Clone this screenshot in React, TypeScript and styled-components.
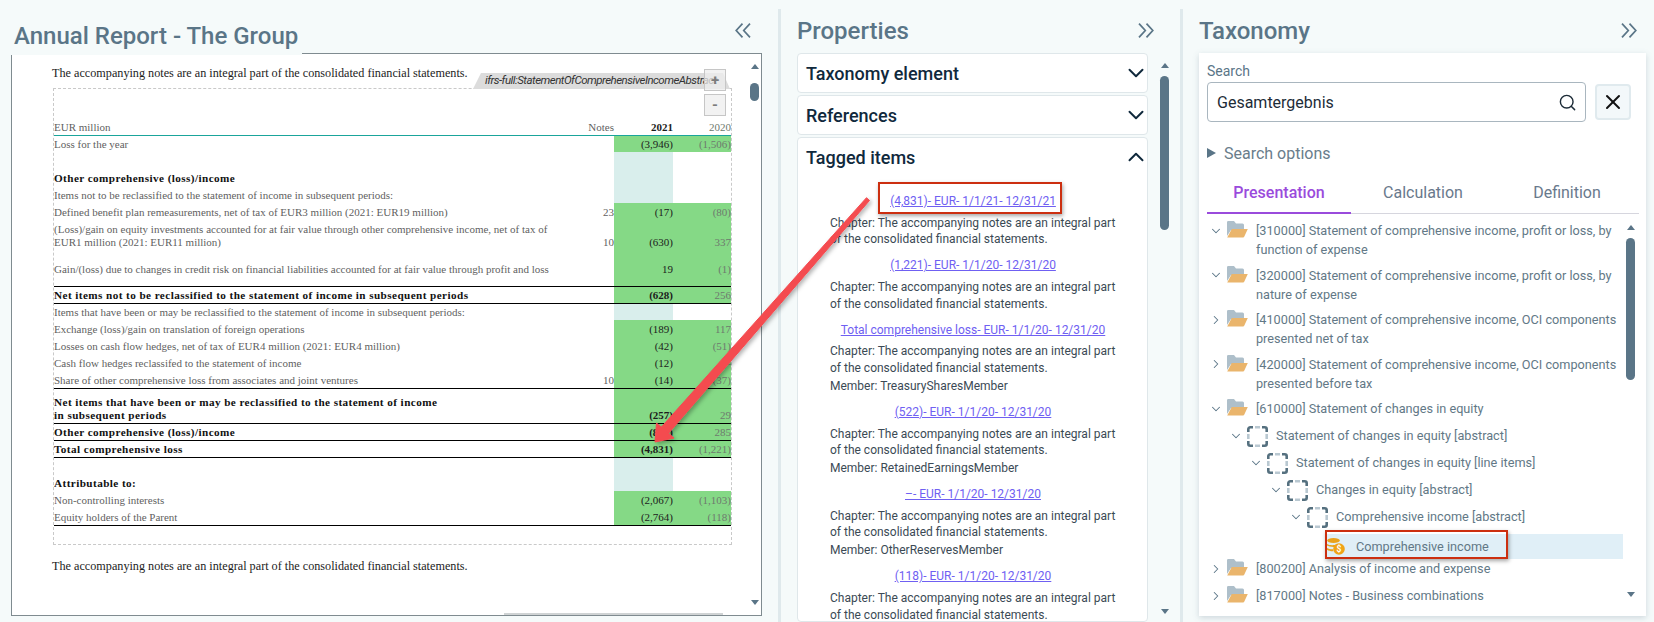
import React from "react";
import styled, { createGlobalStyle } from "styled-components";
import { ChevronDown, ChevronRight, ChevronUp, Search, X } from "lucide-react";

const Global = createGlobalStyle`
  html, body { margin: 0; padding: 0; height: 622px; overflow: hidden; background: #f5fafa; }
  #root { height: 622px; }
  * { box-sizing: border-box; }
`;

const Page = styled.div`
  position: relative;
  display: flex;
  width: 1654px;
  height: 622px;
  overflow: hidden;
  background: #f5fafa;
  font-family: Roboto, "Liberation Sans", sans-serif;
`;
const LeftPanel = styled.section`
  width: 778px;
  flex: none;
  padding-left: 11px;
  display: flex;
  flex-direction: column;
`;
const Splitter = styled.div`
  width: 3px;
  flex: none;
  margin-top: 9px;
  background: #dfe9ec;
`;
const MiddlePanel = styled.section`
  width: 399px;
  flex: none;
  padding-left: 16px;
  display: flex;
  flex-direction: column;
  height: 622px;
`;
const RightPanel = styled.section`
  width: 471px;
  flex: none;
  padding-left: 16px;
  padding-right: 8px;
  display: flex;
  flex-direction: column;
`;
const HeaderRow = styled.header<{ $right: number }>`
  height: 53px;
  flex: none;
  display: flex;
  align-items: flex-start;
  justify-content: space-between;
  padding-right: ${(p) => p.$right}px;
`;
const LeftTitle = styled.h1`
  position: relative;
  z-index: 1;
  margin: 0;
  width: 291px;
  height: 55px;
  padding: 22px 0 0 3px;
  font-size: 24px;
  line-height: 28px;
  font-weight: 500;
  color: #5a7587;
  background: #f5fafa;
  white-space: nowrap;
`;
const Title = styled.h2`
  margin: 0;
  padding-top: 17px;
  font-size: 24px;
  line-height: 28px;
  font-weight: 500;
  color: #5a7587;
`;
const Collapse = styled.span`
  display: flex;
  padding-top: 23px;
  color: #5a7587;
`;
const DocFrame = styled.div`
  position: relative;
  width: 751px;
  height: 563px;
  flex: none;
  display: flex;
  background: #fff;
  border: 1px solid #7f8b90;
`;
const DocBody = styled.div`
  flex: 1;
  padding: 11px 0 0 40px;
`;
const Note = styled.p`
  margin: 0;
  font-family: "Liberation Serif", serif;
  font-size: 12.2px;
  line-height: 16px;
  color: #1c1c1c;
  white-space: nowrap;
`;
const Dashed = styled.div`
  position: relative;
  width: 679px;
  margin: 7px 0 13px 1px;
  padding: 29px 0 18px;
  border: 1px dashed #c9c9c9;
`;
const ConceptTag = styled.div`
  position: absolute;
  top: -16px;
  right: 1px;
  width: 257px;
  height: 16px;
  padding-left: 12px;
  background: #dcdcdc;
  clip-path: polygon(8px 0, 250px 0, 100% 100%, 0 100%);
  font-size: 11.5px;
  letter-spacing: -0.52px;
  line-height: 15px;
  font-style: italic;
  color: #333;
  white-space: nowrap;
  overflow: hidden;
`;
const ZoomButton = styled.button<{ $top: number }>`
  position: absolute;
  right: 5px;
  top: ${(p) => p.$top}px;
  width: 22px;
  height: 22px;
  padding: 0;
  border: 1px solid #c6c6c6;
  background: rgba(238, 238, 238, 0.75);
  color: #7c7c7c;
  font-family: Roboto, sans-serif;
  font-size: 15px;
  font-weight: 700;
  line-height: 18px;
`;
type RowP = { $h: number; $rule?: string };
const Row = styled.div<RowP>`
  display: grid;
  grid-template-columns: 1fr 59px 58px;
  height: ${(p) => p.$h}px;
  border-bottom: ${(p) => p.$rule || "none"};
`;
const Label = styled.div<{ $bold?: boolean; $pb?: number }>`
  display: flex;
  align-items: flex-end;
  justify-content: space-between;
  padding-bottom: ${(p) => p.$pb ?? 1}px;
  font-family: "Liberation Serif", serif;
  font-size: ${(p) => (p.$bold ? 11.2 : 11)}px;
  letter-spacing: ${(p) => (p.$bold ? 0.42 : 0)}px;
  line-height: 13px;
  font-weight: ${(p) => (p.$bold ? 700 : 400)};
  color: ${(p) => (p.$bold ? "#111" : "#5f5f5f")};
  white-space: pre-line;
`;
const Notes = styled.span`
  font-size: 11px;
  letter-spacing: 0;
  font-weight: 400;
  color: #5f5f5f;
`;
const Cell = styled.div<{ $fill?: string; $bold?: boolean; $muted?: boolean; $pb?: number }>`
  display: flex;
  align-items: flex-end;
  justify-content: flex-end;
  padding-bottom: ${(p) => p.$pb ?? 1}px;
  background: ${(p) => p.$fill || "transparent"};
  font-family: "Liberation Serif", serif;
  font-size: 11px;
  line-height: 13px;
  font-weight: ${(p) => (p.$bold ? 700 : 400)};
  color: ${(p) => (p.$muted ? "#6e7a6e" : "#1c1c1c")};
`;
const HScroll = styled.div`
  position: absolute;
  left: 492px;
  bottom: 0;
  width: 219px;
  height: 2px;
  background: #cfd3d4;
`;
const Rail = styled.div<{ $pt: number; $h: number; $mr?: number }>`
  width: 9px;
  flex: none;
  height: ${(p) => p.$h}px;
  margin-top: ${(p) => p.$pt}px;
  margin-right: ${(p) => p.$mr || 0}px;
  display: flex;
  flex-direction: column;
  align-items: center;
`;
const ArrowUp = styled.i`
  width: 0;
  height: 0;
  flex: none;
  border-left: 4.5px solid transparent;
  border-right: 4.5px solid transparent;
  border-bottom: 5px solid #5a7587;
`;
const ArrowDown = styled.i`
  width: 0;
  height: 0;
  flex: none;
  margin-top: auto;
  border-left: 4.5px solid transparent;
  border-right: 4.5px solid transparent;
  border-top: 5px solid #5a7587;
`;
const Thumb = styled.div<{ $gap: number; $h: number }>`
  width: 9px;
  height: ${(p) => p.$h}px;
  margin-top: ${(p) => p.$gap}px;
  flex: none;
  border-radius: 5px;
  background: #5a7587;
`;
const PropsBody = styled.div`
  display: flex;
  gap: 12px;
  flex: 1;
  min-height: 0;
`;
const Cards = styled.div`
  width: 351px;
  flex: none;
  display: flex;
  flex-direction: column;
  gap: 2px;
`;
const Card = styled.div<{ $open?: boolean }>`
  flex: ${(p) => (p.$open ? 1 : "none")};
  height: ${(p) => (p.$open ? "auto" : "40px")};
  background: #fff;
  border: 1px solid #dfe7ea;
  border-radius: 4px;
  overflow: hidden;
`;
const CardHead = styled.div`
  height: 38px;
  padding: 0 0 0 8px;
  display: flex;
  align-items: center;
  justify-content: space-between;
  font-size: 18px;
  font-weight: 500;
  color: #10293c;
  svg { margin-right: -2px; }
`;
const Tagged = styled.div`
  padding: 17px 31px 0 32px;
`;
const ItemLink = styled.a`
  display: block;
  margin-top: 9.5px;
  text-align: center;
  font-size: 12px;
  line-height: 16.5px;
  color: #6f60f2;
  text-decoration: underline;
  &:first-child { margin-top: 0; }
`;
const ItemText = styled.p`
  margin: 5.3px 0 0;
  font-size: 12px;
  line-height: 16.5px;
  color: #3b4a55;
`;
const ItemMember = styled(ItemText)`
  margin-top: 1.5px;
`;
const TaxCard = styled.div`
  width: 447px;
  height: 563px;
  flex: none;
  padding: 11px 8px 0 8px;
  background: #fff;
  box-shadow: 0 2px 6px rgba(90, 117, 135, 0.25);
`;
const FieldLabel = styled.div`
  height: 18px;
  font-size: 14px;
  line-height: 14px;
  color: #5a7587;
`;
const SearchRow = styled.div`
  display: flex;
  align-items: center;
  gap: 9px;
`;
const SearchBox = styled.div`
  width: 379px;
  height: 40px;
  padding: 0 8px 0 9px;
  display: flex;
  align-items: center;
  justify-content: space-between;
  border: 1px solid #a9b6bf;
  border-radius: 4px;
  font-size: 16px;
  color: #1d2c38;
`;
const ClearButton = styled.button`
  width: 36px;
  height: 36px;
  padding: 0;
  display: flex;
  align-items: center;
  justify-content: center;
  border: 2px solid #e0eaee;
  border-radius: 4px;
  background: #f3f8fa;
  color: #111;
`;
const Options = styled.div`
  margin-top: 21px;
  height: 20px;
  display: flex;
  align-items: center;
  gap: 8px;
  font-size: 16px;
  color: #697d8b;
`;
const Triangle = styled.i`
  width: 0;
  height: 0;
  border-top: 5px solid transparent;
  border-bottom: 5px solid transparent;
  border-left: 9px solid #5a7587;
`;
const Tabs = styled.div`
  margin-top: 20px;
  width: 432px;
  display: flex;
  border-bottom: 1px solid #d6d6de;
`;
const Tab = styled.div<{ $active?: boolean }>`
  width: 144px;
  height: 31px;
  margin-bottom: -1px;
  text-align: center;
  font-size: 16px;
  line-height: 20px;
  font-weight: ${(p) => (p.$active ? 500 : 400)};
  color: ${(p) => (p.$active ? "#9a4bdc" : "#69798c")};
  border-bottom: 2px solid ${(p) => (p.$active ? "#9a4bdc" : "transparent")};
`;
const TreeArea = styled.div`
  display: flex;
  gap: 3px;
  margin-left: -1px;
`;
const Tree = styled.div`
  width: 417px;
  padding-top: 7px;
`;
const TreeRow = styled.div<{ $level: number; $h: number; $selected?: boolean }>`
  display: flex;
  align-items: ${(p) => (p.$selected ? "center" : "flex-start")};
  height: ${(p) => p.$h}px;
  padding-left: ${(p) => p.$level * 20}px;
  background: ${(p) =>
    p.$selected ? "linear-gradient(to right, transparent 120px, #e0eff7 120px)" : "transparent"};
`;
const Twist = styled.span`
  width: 20px;
  height: 19px;
  flex: none;
  display: flex;
  align-items: center;
  justify-content: center;
  color: #5a7587;
`;
const IconSlot = styled.span`
  width: 21px;
  flex: none;
  margin: 0 8px 0 1px;
  display: flex;
`;
const TreeText = styled.span`
  font-size: 12.7px;
  line-height: 19.2px;
  color: #627886;
`;
const RedBox = styled.div<{ $x: number; $y: number; $w: number; $h: number }>`
  position: absolute;
  left: ${(p) => p.$x}px;
  top: ${(p) => p.$y}px;
  width: ${(p) => p.$w}px;
  height: ${(p) => p.$h}px;
  border: 2px solid #cc2f10;
  box-shadow: 1px 2px 4px rgba(0, 0, 0, 0.35);
`;
const Overlay = styled.svg`
  position: absolute;
  left: 0;
  top: 0;
  pointer-events: none;
`;

const DoubleChevron = ({ left }: { left?: boolean }) => (
  <svg width="16" height="15" viewBox="0 0 16 15" fill="none" stroke="currentColor" strokeWidth="1.7">
    <path d={left ? "M7.5 .6L1.200 7.500L7.500 14.400M15 .6L8.700 7.500L15 14.400" : "M1 .6L7.300 7.500L1 14.400M8.500 .6L14.800 7.500L8.500 14.400"} />
  </svg>
);
const Folder = () => (
  <svg width="21" height="17" viewBox="0 0 21 17">
    <path d="M0 1.200A1.200 1.200 0 0 1 1.200 0H7l2 2.500h6.500A1.500 1.500 0 0 1 17 4v5H4L0 15Z" fill="#aebfca" />
    <path d="M4.800 8H20.800L17.200 15.800c-.2.500-.6.700-1.100.7H.2Z" fill="#eab56c" />
  </svg>
);
const Dashes = () => (
  <svg width="21" height="21" viewBox="0 0 21 21" fill="none" strokeWidth="2.6">
    <path d="M1.300 6V3.300a2 2 0 0 1 2-2H6M15 1.300h2.700a2 2 0 0 1 2 2V6M19.700 15v2.700a2 2 0 0 1-2 2H15M6 19.700H3.300a2 2 0 0 1-2-2V15" stroke="#55707f" />
    <path d="M8 1.300h5M19.700 8v5M13 19.700H8M1.300 13V8" stroke="#b9c8d1" />
  </svg>
);
const Coin = () => (
  <svg width="18" height="17" viewBox="0 0 18 17">
    <ellipse cx="6.500" cy="2.600" rx="6.300" ry="2.500" fill="#eaa21c" />
    <path d="M0 6c2 1.400 7 1.500 9 .6L7.500 9C4.500 9.200 1.500 8.600 0 7.600ZM0 10c1.500 1 4 1.400 6 1.300l.3 2C4 13.400 1.500 12.800 0 11.800Z" fill="#eaa21c" />
    <circle cx="12" cy="11" r="5.800" fill="#f0a417" />
    <text x="12" y="14" textAnchor="middle" fontSize="8.500" fontWeight="700" fill="#fff" fontFamily="Roboto, sans-serif">$</text>
  </svg>
);

type R = {
  label?: string; notes?: string; a?: string; b?: string; h: number;
  bold?: boolean; fill?: "tint" | "green"; rule?: boolean; pb?: number;
};
const GREEN = "#85d986";
const TINT = "#d9eeec";
const rows: R[] = [
  { label: "Loss for the year", a: "(3,946)", b: "(1,506)", h: 16, fill: "green" },
  { h: 17, fill: "tint" },
  { label: "Other comprehensive (loss)/income", h: 17, bold: true, fill: "tint" },
  { label: "Items not to be reclassified to the statement of income in subsequent periods:", h: 17, fill: "tint" },
  { label: "Defined benefit plan remeasurements, net of tax of EUR3 million (2021: EUR19 million)", notes: "23", a: "(17)", b: "(80)", h: 17, fill: "green" },
  { label: "(Loss)/gain on equity investments accounted for at fair value through other comprehensive income, net of tax of\nEUR1 million (2021: EUR11 million)", notes: "10", a: "(630)", b: "337", h: 30, fill: "green" },
  { label: "Gain/(loss) due to changes in credit risk on financial liabilities accounted for at fair value through profit and loss", a: "19", b: "(1)", h: 37, fill: "green", rule: true, pb: 10 },
  { label: "Net items not to be reclassified to the statement of income in subsequent periods", a: "(628)", b: "256", h: 17, bold: true, fill: "green", rule: true },
  { label: "Items that have been or may be reclassified to the statement of income in subsequent periods:", h: 16, fill: "tint" },
  { label: "Exchange (loss)/gain on translation of foreign operations", a: "(189)", b: "117", h: 17, fill: "green" },
  { label: "Losses on cash flow hedges, net of tax of EUR4 million (2021: EUR4 million)", a: "(42)", b: "(51)", h: 17, fill: "green" },
  { label: "Cash flow hedges reclassifed to the statement of income", a: "(12)", b: "–", h: 17, fill: "green" },
  { label: "Share of other comprehensive loss from associates and joint ventures", notes: "10", a: "(14)", b: "(37)", h: 18, fill: "green", rule: true },
  { label: "Net items that have been or may be reclassified to the statement of income\nin subsequent periods", a: "(257)", b: "29", h: 35, bold: true, fill: "green", rule: true },
  { label: "Other comprehensive (loss)/income", a: "(885)", b: "285", h: 17, bold: true, fill: "green", rule: true },
  { label: "Total comprehensive loss", a: "(4,831)", b: "(1,221)", h: 17, bold: true, fill: "green", rule: true },
  { h: 16, fill: "tint" },
  { label: "Attributable to:", h: 17, bold: true, fill: "tint" },
  { label: "Non-controlling interests", a: "(2,067)", b: "(1,103)", h: 17, fill: "green" },
  { label: "Equity holders of the Parent", a: "(2,764)", b: "(118)", h: 18, fill: "green", rule: true },
];

const chap = "Chapter: The accompanying notes are an integral part of the consolidated financial statements.";
const items = [
  { link: "(4,831)- EUR- 1/1/21- 12/31/21" },
  { link: "(1,221)- EUR- 1/1/20- 12/31/20" },
  { link: "Total comprehensive loss- EUR- 1/1/20- 12/31/20", member: "TreasurySharesMember" },
  { link: "(522)- EUR- 1/1/20- 12/31/20", member: "RetainedEarningsMember" },
  { link: "–- EUR- 1/1/20- 12/31/20", member: "OtherReservesMember" },
  { link: "(118)- EUR- 1/1/20- 12/31/20" },
];

type T = { level: number; h: number; twist?: "down" | "right"; icon: "folder" | "dash" | "coin"; text: string; selected?: boolean };
const tree: T[] = [
  { level: 0, h: 44.5, twist: "down", icon: "folder", text: "[310000] Statement of comprehensive income, profit or loss, by function of expense" },
  { level: 0, h: 44.5, twist: "down", icon: "folder", text: "[320000] Statement of comprehensive income, profit or loss, by nature of expense" },
  { level: 0, h: 44.5, twist: "right", icon: "folder", text: "[410000] Statement of comprehensive income, OCI components presented net of tax" },
  { level: 0, h: 44.5, twist: "right", icon: "folder", text: "[420000] Statement of comprehensive income, OCI components presented before tax" },
  { level: 0, h: 27, twist: "down", icon: "folder", text: "[610000] Statement of changes in equity" },
  { level: 1, h: 27, twist: "down", icon: "dash", text: "Statement of changes in equity [abstract]" },
  { level: 2, h: 27, twist: "down", icon: "dash", text: "Statement of changes in equity [line items]" },
  { level: 3, h: 27, twist: "down", icon: "dash", text: "Changes in equity [abstract]" },
  { level: 4, h: 27, twist: "down", icon: "dash", text: "Comprehensive income [abstract]" },
  { level: 5, h: 25, icon: "coin", text: "Comprehensive income", selected: true },
  { level: 0, h: 27, twist: "right", icon: "folder", text: "[800200] Analysis of income and expense" },
  { level: 0, h: 27, twist: "right", icon: "folder", text: "[817000] Notes - Business combinations" },
];

export default function App() {
  return (
    <Page>
      <Global />
      <LeftPanel>
        <HeaderRow $right={27}>
          <LeftTitle>Annual Report - The Group</LeftTitle>
          <Collapse><DoubleChevron left /></Collapse>
        </HeaderRow>
        <DocFrame>
          <DocBody>
            <Note>The accompanying notes are an integral part of the consolidated financial statements.</Note>
            <Dashed>
              <ConceptTag>ifrs-full:StatementOfComprehensiveIncomeAbstract</ConceptTag>
              <ZoomButton $top={-20}>+</ZoomButton>
              <ZoomButton $top={5}>-</ZoomButton>
              <Row $h={18} $rule="1.5px solid #1aa59b">
                <Label>EUR million<Notes>Notes</Notes></Label>
                <Cell $bold>2021</Cell>
                <Cell $muted>2020</Cell>
              </Row>
              {rows.map((r, i) => (
                <Row key={i} $h={r.h} $rule={r.rule ? "1px solid #000" : undefined}>
                  <Label $bold={r.bold} $pb={r.pb}>
                    <span>{r.label}</span>
                    {r.notes && <Notes>{r.notes}</Notes>}
                  </Label>
                  <Cell $fill={r.fill === "green" ? GREEN : r.fill === "tint" ? TINT : undefined} $bold={r.bold} $pb={r.pb}>{r.a}</Cell>
                  <Cell $fill={r.fill === "green" ? GREEN : undefined} $muted $pb={r.pb}>{r.b}</Cell>
                </Row>
              ))}
            </Dashed>
            <Note>The accompanying notes are an integral part of the consolidated financial statements.</Note>
          </DocBody>
          <Rail $pt={10} $h={541} $mr={2}>
            <ArrowUp />
            <Thumb $gap={14} $h={18} />
            <ArrowDown />
          </Rail>
          <HScroll />
        </DocFrame>
      </LeftPanel>
      <Splitter />
      <MiddlePanel>
        <HeaderRow $right={26}>
          <Title>Properties</Title>
          <Collapse><DoubleChevron /></Collapse>
        </HeaderRow>
        <PropsBody>
          <Cards>
            <Card><CardHead>Taxonomy element<ChevronDown size={26} strokeWidth={1.8} /></CardHead></Card>
            <Card><CardHead>References<ChevronDown size={26} strokeWidth={1.8} /></CardHead></Card>
            <Card $open>
              <CardHead>Tagged items<ChevronUp size={26} strokeWidth={1.8} /></CardHead>
              <Tagged>
                {items.map((it) => (
                  <React.Fragment key={it.link}>
                    <ItemLink>{it.link}</ItemLink>
                    <ItemText>{chap}</ItemText>
                    {it.member && <ItemMember>Member: {it.member}</ItemMember>}
                  </React.Fragment>
                ))}
              </Tagged>
            </Card>
          </Cards>
          <Rail $pt={10} $h={551}>
            <ArrowUp />
            <Thumb $gap={8} $h={154} />
            <ArrowDown />
          </Rail>
        </PropsBody>
      </MiddlePanel>
      <Splitter />
      <RightPanel>
        <HeaderRow $right={9}>
          <Title>Taxonomy</Title>
          <Collapse><DoubleChevron /></Collapse>
        </HeaderRow>
        <TaxCard>
          <FieldLabel>Search</FieldLabel>
          <SearchRow>
            <SearchBox>Gesamtergebnis<Search size={19} strokeWidth={1.8} color="#1d2c38" /></SearchBox>
            <ClearButton><X size={24} strokeWidth={2} /></ClearButton>
          </SearchRow>
          <Options><Triangle />Search options</Options>
          <Tabs>
            <Tab $active>Presentation</Tab>
            <Tab>Calculation</Tab>
            <Tab>Definition</Tab>
          </Tabs>
          <TreeArea>
            <Tree>
              {tree.map((t, i) => (
                <TreeRow key={i} $level={t.level} $h={t.h} $selected={t.selected}>
                  <Twist>
                    {t.twist === "down" && <ChevronDown size={14} strokeWidth={1.8} />}
                    {t.twist === "right" && <ChevronRight size={14} strokeWidth={1.8} />}
                  </Twist>
                  <IconSlot>
                    {t.icon === "folder" && <Folder />}
                    {t.icon === "dash" && <Dashes />}
                    {t.icon === "coin" && <Coin />}
                  </IconSlot>
                  <TreeText>{t.text}</TreeText>
                </TreeRow>
              ))}
            </Tree>
            <Rail $pt={11} $h={372}>
              <ArrowUp />
              <Thumb $gap={8} $h={142} />
              <ArrowDown />
            </Rail>
          </TreeArea>
        </TaxCard>
      </RightPanel>
      <RedBox $x={878} $y={182} $w={184} $h={32} />
      <RedBox $x={1325} $y={530} $w={183} $h={29} />
      <Overlay width="1654" height="622" viewBox="0 0 1654 622">
        <defs>
          <filter id="arrowShadow" x="-10%" y="-10%" width="120%" height="120%">
            <feDropShadow dx="2" dy="2" stdDeviation="2" floodColor="#000" floodOpacity="0.3" />
          </filter>
        </defs>
        <g filter="url(#arrowShadow)" fill="#f44b50" stroke="#f44b50" strokeWidth="1" strokeLinejoin="round">
          <path d="M869.500 200.500L866.500 197.700L660.500 428L667.500 434.500Z" />
          <path d="M655 442L656.500 423L674 438Z" />
        </g>
      </Overlay>
    </Page>
  );
}
